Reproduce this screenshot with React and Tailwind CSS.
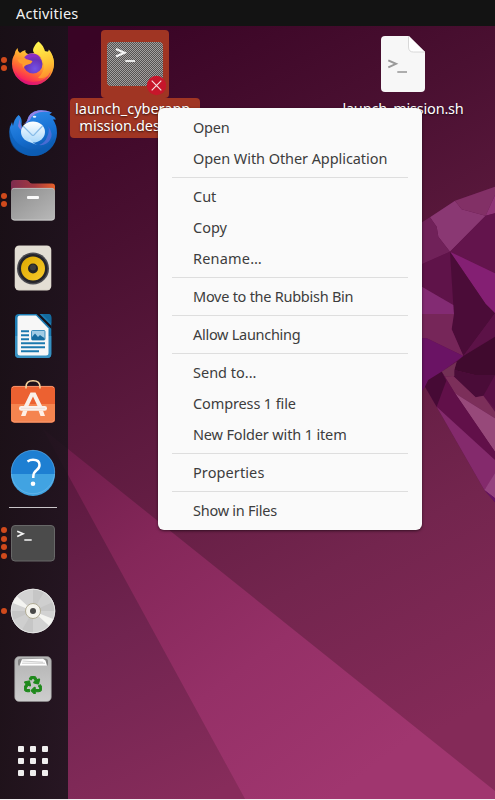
import React from "react";
import { FaRecycle } from "react-icons/fa";

const ICON = "block h-12 w-12 shrink-0";

function Wallpaper() {
  return (
    <svg className="absolute inset-0 h-full w-full" viewBox="0 0 495 799" preserveAspectRatio="none">
      <defs>
        <linearGradient id="wp" gradientUnits="userSpaceOnUse" x1="60" y1="60" x2="420" y2="740">
          <stop offset="0" stopColor="#390425" />
          <stop offset="0.25" stopColor="#4a1031" />
          <stop offset="0.5" stopColor="#5f1b40" />
          <stop offset="0.75" stopColor="#73254e" />
          <stop offset="1" stopColor="#842a58" />
        </linearGradient>
        <linearGradient id="low" gradientUnits="userSpaceOnUse" x1="50" y1="470" x2="200" y2="800">
          <stop offset="0" stopColor="#5b183e" />
          <stop offset="0.5" stopColor="#712450" />
          <stop offset="1" stopColor="#872c5b" />
        </linearGradient>
        <linearGradient id="beam" gradientUnits="userSpaceOnUse" x1="60" y1="440" x2="330" y2="800">
          <stop offset="0" stopColor="#6e1c4a" />
          <stop offset="0.3" stopColor="#842759" />
          <stop offset="0.65" stopColor="#953067" />
          <stop offset="1" stopColor="#a0366f" />
        </linearGradient>
      </defs>
      <rect width="495" height="799" fill="url(#wp)" />
      <path d="M43 429L245 799H0V560Z" fill="url(#low)" />
      <path d="M43 429L495 791V799H245Z" fill="url(#beam)" />
      <g transform="translate(415 130) scale(.33333)">
        <path d="M0 290L45 262L120 212L240 170V1117L208 1080L65 830L30 770L0 750Z" fill="#5f1349" />
        <path d="M45 262L120 212L140 238L212 257L105 365L70 320L65 290Z" fill="#8a3873" />
        <path d="M120 212L240 170V195L212 257L140 238Z" fill="#823066" />
        <path d="M240 195V250L212 257Z" fill="#8f3576" />
        <path d="M0 290L45 262L65 290L70 320L105 365L0 412Z" fill="#702159" />
        <path d="M0 412L105 365L115 525L0 458Z" fill="#5f1349" />
        <path d="M105 365L212 257L240 250V430Z" fill="#63144c" />
        <path d="M105 365L240 430V550L212 522Z" fill="#841f73" />
        <path d="M105 365L212 522L240 550L145 678L110 598L115 525Z" fill="#4b0c38" />
        <path d="M0 458L115 525L117 552H0Z" fill="#832b73" />
        <path d="M0 552H117L110 598L145 678L35 625H0Z" fill="#762659" />
        <path d="M0 625H35L145 678L80 725L40 750L30 770L22 782L0 800Z" fill="#6a1364" />
        <path d="M240 550V620L145 678Z" fill="#5c1247" />
        <path d="M145 678L240 620V735H180L118 720L125 695Z" fill="#400a2e" />
        <path d="M118 720L180 735H240V800L205 797L182 802L115 738Z" fill="#4a0c38" />
        <path d="M240 735V835L205 797Z" fill="#5a0f45" />
        <path d="M80 725L125 695L118 720V738L90 740Z" fill="#733055" />
        <path d="M90 740L115 738L182 802L205 797L240 845V865L120 790Z" fill="#7c2f5a" />
        <path d="M120 790L240 865V965Z" fill="#97497a" />
        <path d="M80 725L120 790L240 965V990L65 830Z" fill="#611049" />
        <path d="M30 770L40 750L80 725L94 752L65 830Z" fill="#460a35" />
        <path d="M65 830L240 990V1035L208 1080Z" fill="#842a6c" />
        <path d="M208 1080L240 1030V1105Z" fill="#95427f" />
        <path d="M208 1080L240 1105V1117Z" fill="#671465" />
      </g>
    </svg>
  );
}

function FirefoxIcon() {
  return (
    <svg className={ICON} viewBox="9 40 48 48">
      <defs>
        <linearGradient id="ffBody" x1="0.8" y1="0.1" x2="0.3" y2="1">
          <stop offset="0" stopColor="#ffe84a" />
          <stop offset="0.35" stopColor="#ffab2f" />
          <stop offset="0.62" stopColor="#ff6a33" />
          <stop offset="0.85" stopColor="#fb2c55" />
          <stop offset="1" stopColor="#d8127f" />
        </linearGradient>
        <linearGradient id="ffTail" x1="0.5" y1="0" x2="0.7" y2="1">
          <stop offset="0" stopColor="#fff44f" />
          <stop offset="0.6" stopColor="#ffc233" />
          <stop offset="1" stopColor="#ff8a2e" />
        </linearGradient>
        <radialGradient id="ffGlobe" cx="0.6" cy="0.75" r="0.8">
          <stop offset="0" stopColor="#7352e6" />
          <stop offset="0.6" stopColor="#6a32b8" />
          <stop offset="1" stopColor="#a02bc0" />
        </radialGradient>
      </defs>
      <path d="M17.500 48Q17.500 51.500 20 53Q22 51 25.500 50Q24.500 52.500 28 54L44 51L50 52Q54 57 54 64A21 21 0 0 1 12 64Q12 58 14.500 54.500Q15 50.500 17.500 48Z" fill="url(#ffBody)" />
      <path d="M38.500 41.500C42 44 44.500 48 45.500 53Q48.500 52.500 48.800 49.500C53 54 54.500 61 53.500 67C51 74 46 79 38 78Q44 73 44 65Q43 57 38 54Q33 54 33 50Q34 45 38.500 41.500Z" fill="url(#ffTail)" />
      <circle cx="33" cy="64" r="9.500" fill="url(#ffGlobe)" />
      <path d="M17.500 59.500Q24 58 27.500 59.500L32.500 61Q31.500 64 28 64.500Q24.500 65 23.500 68Q22 66 22.500 64Q19 63.500 17.500 59.500Z" fill="#ff9d2e" />
      <path d="M24 57.500Q29 52.500 34 53.500Q39 54.500 40.500 58Q36 55.500 32 57Q28 59 24 57.500Z" fill="#8a2fc4" />
      <path d="M15 71Q20 82 33 82Q46 82 51 71Q47 85 33 85Q19 85 15 71Z" fill="#d5107c" fillOpacity=".55" />
    </svg>
  );
}

function ThunderbirdIcon() {
  return (
    <svg className={ICON} viewBox="9 108 48 48">
      <defs>
        <linearGradient id="tbBody" x1="0.3" y1="0" x2="0.6" y2="1">
          <stop offset="0" stopColor="#2f8cea" />
          <stop offset="0.55" stopColor="#1670d2" />
          <stop offset="1" stopColor="#0b55a8" />
        </linearGradient>
        <linearGradient id="tbMail" x1="0" y1="0" x2="0" y2="1">
          <stop offset="0" stopColor="#ffffff" />
          <stop offset="1" stopColor="#a9d8fa" />
        </linearGradient>
      </defs>
      <path d="M18.500 115Q22.500 118 21.500 124Q22.500 127 22 130Q25 125 27 121Q29 112 38 110.500Q44 109.500 52 112.500L49.500 114.500Q54 116 56 119.500L53 119.500Q57 125 57 133A23.700 23 0 0 1 9.500 133Q9 128 12 122L13 126Q14 119 18.500 115Z" fill="url(#tbBody)" />
      <path d="M9.500 125Q11 143 28 149Q43 153 55 138Q50 156 32 156Q12 154 9.500 137Z" fill="#0d5db5" fillOpacity=".65" />
      <path d="M27 121Q29 112 38 110.500Q44 109.500 52 112.500Q41 110.500 35 114Q31 116.500 30 120Q27 123 23 124Q26 123 27 121Z" fill="#9184e8" />
      <path d="M18 116Q20 120 18 126Q20 130 22 130Q20 120 18 116Z" fill="#8279db" />
      <ellipse cx="33" cy="132" rx="12" ry="10.500" fill="url(#tbMail)" />
      <path d="M23 126L32 135Q33 136 34 135L42.500 126" fill="none" stroke="#88bce8" strokeWidth="1.100" />
      <path d="M28 140Q32 144 38 145Q33 144 30 139Z" fill="#c6e7ff" />
      <path d="M39 145Q45 143 47 137Q50 131 48 126Q54 134 50 140Q46 146 39 145Z" fill="#5f71dd" fillOpacity=".7" />
      <ellipse cx="34.500" cy="116.800" rx="1.800" ry="1" fill="#dff2ff" />
    </svg>
  );
}

function FilesIcon() {
  return (
    <svg className={ICON} viewBox="9 176 48 48">
      <defs>
        <linearGradient id="fb"><stop offset="0" stopColor="#7d2c4f" /><stop offset=".55" stopColor="#a53a40" /><stop offset="1" stopColor="#e8602a" /></linearGradient>
        <linearGradient id="ff" x1="0" y1="0" x2="1" y2="1"><stop offset="0" stopColor="#8c8c8c" /><stop offset="1" stopColor="#b9b9b9" /></linearGradient>
      </defs>
      <path d="M11 192V183Q11 180 14 180H26Q28 180 29 181.500Q30 183.500 32 183.500H52Q55 183.500 55 186.500V198H11Z" fill="url(#fb)" />
      <rect x="11" y="188" width="44" height="32.500" rx="3.500" fill="url(#ff)" />
      <path d="M12 189.500Q13 188.400 14.500 188.400H51.500Q53 188.400 54 189.500" fill="none" stroke="#c4c4c4" strokeWidth=".8" />
      <path d="M12 218.500Q13 220 14.500 220H51.500Q53 220 54 218.500" fill="none" stroke="#d2d2d2" strokeWidth=".8" />
      <rect x="27" y="196" width="12" height="3" rx="1" fill="#fafafa" />
    </svg>
  );
}

function RhythmboxIcon() {
  return (
    <svg className={ICON} viewBox="9 244 48 48">
      <defs><linearGradient id="rb" x1="0" y1="0" x2="1" y2="1"><stop offset="0" stopColor="#dca800" /><stop offset="1" stopColor="#f9cb2c" /></linearGradient></defs>
      <rect x="14.700" y="245.500" width="36.600" height="45" rx="4.500" fill="#d9d4c9" />
      <rect x="15.200" y="246" width="35.600" height="43.500" rx="4" fill="#e3ded4" />
      <circle cx="33" cy="268.500" r="16" fill="#4a4a50" />
      <circle cx="33" cy="268.500" r="14.500" fill="#24242a" />
      <circle cx="33" cy="268.500" r="12" fill="url(#rb)" />
      <circle cx="33" cy="268.500" r="5" fill="#242424" />
      <circle cx="33" cy="267.500" r="3" fill="#3d3d3d" />
    </svg>
  );
}

function WriterIcon() {
  return (
    <svg className={ICON} viewBox="9 312 48 48">
      <rect x="15" y="314" width="36.300" height="44" rx="4" fill="#1d7db4" />
      <path d="M15 336H51.300V354Q51.300 358 47.300 358H19Q15 358 15 354Z" fill="#3791c1" />
      <path d="M39 313.500L51.500 326V329L36 313.500Z" fill="#171018" />
      <path d="M42 314H49Q51.300 314 51.300 316.500V323.500Z" fill="#146a9e" />
      <path d="M17.500 318Q17.500 315.500 20 315.500H36L48.500 328.500V353Q48.500 355.500 46 355.500H20Q17.500 355.500 17.500 353Z" fill="#f7f7f7" />
      <path d="M21 331.200H29M21 335.200H29M21 339.200H29M21 343.200H45M21 347.200H45M21 351.200H39" stroke="#1b79ae" strokeWidth="1.900" />
      <rect x="31.500" y="330.500" width="13.500" height="9.500" rx="1" fill="#a2cce5" stroke="#1b79ae" strokeWidth=".8" />
      <path d="M32 340V337L35 333.500L38 337L40 335L42 336.500L44.500 338V340Z" fill="#176c9f" />
    </svg>
  );
}

function SoftwareIcon() {
  return (
    <svg className={ICON} viewBox="9 380 48 48">
      <rect x="11" y="386" width="44" height="36.500" rx="3.500" fill="#ec6131" />
      <path d="M11 404H55V419Q55 422.500 51.500 422.500H14.500Q11 422.500 11 419Z" fill="#f5844f" />
      <path d="M12 420Q13 422 14.500 422H51.500Q53 422 54 420M12 388Q13 386.400 14.500 386.400H51.500Q53 386.400 54 388" fill="none" stroke="#f6a17c" strokeWidth=".8" />
      <path d="M26 388.500V387Q26 380.800 33 380.800Q40 380.800 40 387V388.500" fill="none" stroke="#f6d29b" strokeWidth="1.600" />
      <path d="M30.500 392.500H35.500L42.500 407H38L33 396.500L28 407H23.500Z" fill="#f9efe9" />
      <rect x="19" y="406" width="28" height="4.700" rx="2.200" fill="#f9f1ed" />
      <path d="M23 410.500H27.500L25.500 416H21ZM38.500 410.500H43L45 416H40.500Z" fill="#fff0e6" />
      <path d="M21 408.300H45" stroke="#e0cfc7" strokeWidth=".5" />
    </svg>
  );
}

function HelpIcon() {
  return (
    <svg className={ICON} viewBox="9 448 48 48">
      <circle cx="33" cy="472" r="22" fill="#1e7fd2" />
      <path d="M11 474H55A22 22 0 0 1 11 474Z" fill="#41a3e2" />
      <circle cx="33" cy="472" r="21.700" fill="none" stroke="#8cc8f2" strokeOpacity=".5" strokeWidth=".8" />
      <path d="M27.500 461.500Q30 459.800 33 459.800Q39.500 459.800 39.500 465Q39.500 468 36.500 470.300Q33.300 472.800 33.300 476.500V478" fill="none" stroke="#fff" strokeWidth="2.500" />
      <circle cx="33" cy="483.800" r="2.300" fill="#fff" />
    </svg>
  );
}

function TerminalIcon() {
  return (
    <svg className={ICON} viewBox="9 519 48 48">
      <rect x="11.500" y="525.500" width="43" height="35.500" rx="3.500" fill="#4b4b4b" stroke="#686868" />
      <path d="M17.200 531.200L23 533.700L17.200 536.400" fill="none" stroke="#f5f5f5" strokeWidth="1.700" />
      <path d="M24.300 540H31.700" stroke="#f5f5f5" strokeWidth="1.500" />
    </svg>
  );
}

function DiscIcon() {
  return (
    <svg className={ICON} viewBox="9 587 48 48">
      <circle cx="33" cy="611" r="22.200" fill="#d2d2d2" />
      <path d="M33 611V589A22 22 0 0 1 55 611ZM33 611V633A22 22 0 0 1 11 611Z" fill="#c6c6c6" />
      <path d="M33 611L44 592A22 22 0 0 1 53 602ZM33 611L22 630A22 22 0 0 1 13 620Z" fill="#cfcfcf" />
      <path d="M33 611L12.800 603Q14.500 598.500 17 596.200ZM33 611L53.200 619Q51.500 623.500 49 625.800Z" fill="#f4f4f1" />
      <circle cx="33" cy="611" r="21.800" fill="none" stroke="#efefef" strokeWidth=".7" />
      <circle cx="33" cy="611" r="7.500" fill="#f4f3ed" stroke="#aaa58c" strokeWidth=".9" />
      <circle cx="33" cy="611" r="3" fill="#494949" />
    </svg>
  );
}

function TrashIcon() {
  return (
    <svg className={ICON} viewBox="9 655 48 48">
      <defs>
        <linearGradient id="tr" x1="0" y1="0" x2="0" y2="1"><stop offset="0" stopColor="#b4b4b4" /><stop offset="1" stopColor="#cdcdcd" /></linearGradient>
      </defs>
      <rect x="14.700" y="656.500" width="36.600" height="45" rx="4.500" fill="url(#tr)" stroke="#8f8f8f" strokeWidth=".6" />
      <path d="M18 664V661Q18 658.500 21 658.500H45Q48 658.500 48 661V664Q48 666 46 666H20Q18 666 18 664Z" fill="#858585" />
      <path d="M19.500 665.800L22 659.300L43 658.800L45.500 660.500L47 665.800Z" fill="#fff" />
      <path d="M22 663.200H45M22.500 661L43 662.200" stroke="#aaa" strokeWidth=".6" />
      <FaRecycle x="24" y="676" size={18} color="#1f891c" stroke="#1f891c" strokeWidth={30} />
    </svg>
  );
}

function DockItem({ dots = 0, children }) {
  return (
    <div className="flex h-[68px] w-full shrink-0 items-center">
      <div className="flex w-[9px] shrink-0 flex-col gap-[2.7px] pl-px">
        {Array.from({ length: dots }, (_, i) => (
          <span key={i} className="h-1.5 w-1.5 rounded-full bg-[#d04a1c]" />
        ))}
      </div>
      {children}
    </div>
  );
}

function Dock() {
  return (
    <nav className="flex w-[68px] shrink-0 flex-col bg-linear-to-r from-[#151014]/90 to-[#18131a]/85 pt-1">
      <DockItem dots={2}><FirefoxIcon /></DockItem>
      <DockItem><ThunderbirdIcon /></DockItem>
      <DockItem dots={2}><FilesIcon /></DockItem>
      <DockItem><RhythmboxIcon /></DockItem>
      <DockItem><WriterIcon /></DockItem>
      <DockItem><SoftwareIcon /></DockItem>
      <DockItem><HelpIcon /></DockItem>
      <div className="mt-px mb-px ml-[9px] h-px w-12 shrink-0 bg-[#c9c5c8]" />
      <DockItem dots={4}><TerminalIcon /></DockItem>
      <DockItem dots={1}><DiscIcon /></DockItem>
      <DockItem><TrashIcon /></DockItem>
      <div className="mt-[33px] ml-[18px] grid w-[30px] grid-cols-3 gap-1.5">
        {Array.from({ length: 9 }, (_, i) => (
          <span key={i} className="h-1.5 w-1.5 rounded-[1px] bg-[#efeeee]" />
        ))}
      </div>
    </nav>
  );
}

function LauncherGlyph() {
  return (
    <svg className="block h-[68px] w-[68px]" viewBox="101 30 68 68">
      <defs>
        <pattern id="chk" x="0" y="0" width="2" height="2" patternUnits="userSpaceOnUse">
          <rect width="2" height="2" fill="#555252" />
          <rect width="1" height="1" fill="#a3a09f" />
          <rect x="1" y="1" width="1" height="1" fill="#a3a09f" />
        </pattern>
      </defs>
      <rect x="107" y="42" width="56" height="44" rx="4" fill="url(#chk)" />
      <path d="M116 49L124.500 52.700L116 56.500" fill="none" stroke="#f4f4f4" strokeWidth="2.200" />
      <path d="M125.300 61H135" stroke="#f4f4f4" strokeWidth="1.800" />
      <circle cx="156.500" cy="85.500" r="9.700" fill="#c7162b" />
      <path d="M151.700 80.700L161.300 90.300M161.300 80.700L151.700 90.300" stroke="#f7dfe1" strokeWidth="1.200" />
    </svg>
  );
}

function ScriptGlyph() {
  return (
    <svg className="block h-[68px] w-[68px]" viewBox="369 30 68 68">
      <path d="M381 40Q381 36 385 36H409L425 52V88Q425 92 421 92H385Q381 92 381 88Z" fill="#f7f7f7" />
      <path d="M408.500 36V47Q408.500 52 413.500 52H425" fill="#fff" stroke="#cfcfcf" strokeWidth=".8" />
      <path d="M388.300 60.300L396 63.800L388.300 67.400" fill="none" stroke="#9a9a9a" strokeWidth="2" />
      <path d="M397.300 72H407" stroke="#9a9a9a" strokeWidth="1.600" />
    </svg>
  );
}

function Desktop() {
  const label = "h-10 w-[130px] rounded-[4px] px-px pt-0.5 text-center text-[14.5px] leading-[17px] whitespace-nowrap text-white [text-shadow:0_1px_2px_rgba(0,0,0,0.7)]";
  return (
    <main className="flex flex-1 items-start justify-between pt-1 pr-[27px] pl-0.5">
      <div className="flex flex-col items-center">
        <div className="rounded-[4px] bg-[#a03523]"><LauncherGlyph /></div>
        <div className={label + " bg-[#a03523]"}>
          launch_cyberapp-
          <br />
          mission.desktop
        </div>
      </div>
      <div className="flex flex-col items-center">
        <ScriptGlyph />
        <div className={label + " tracking-[-0.2px]"}>launch_mission.sh</div>
      </div>
    </main>
  );
}

function Item({ children, className = "" }) {
  return (
    <div role="menuitem" className={"flex h-[31px] items-center pl-[35px] whitespace-nowrap " + className}>
      {children}
    </div>
  );
}

function Sep() {
  return <div className="mx-3.5 my-[3px] h-px bg-[#dedede]" />;
}

function ContextMenu() {
  return (
    <div role="menu" className="absolute top-[108px] left-[158px] w-[264px] rounded-[6px] bg-[#fafafa] py-1 text-[14.5px] text-[#3d3d3d] shadow-[0_1px_3px_rgba(0,0,0,0.55)]">
      <Item className="tracking-[-0.2px]">Open</Item>
      <Item className="tracking-[-0.07px]">Open With Other Application</Item>
      <Sep />
      <Item>Cut</Item>
      <Item>Copy</Item>
      <Item className="tracking-[0.2px]">Rename…</Item>
      <Sep />
      <Item className="tracking-[-0.26px]">Move to the Rubbish Bin</Item>
      <Sep />
      <Item className="tracking-[-0.28px]">Allow Launching</Item>
      <Sep />
      <Item>Send to...</Item>
      <Item className="tracking-[-0.12px]">Compress 1 file</Item>
      <Item className="tracking-[-0.15px]">New Folder with 1 item</Item>
      <Sep />
      <Item className="tracking-[0.1px]">Properties</Item>
      <Sep />
      <Item className="tracking-[-0.25px]">Show in Files</Item>
    </div>
  );
}

export default function App() {
  return (
    <div className="h-[800px] w-[495px] overflow-hidden bg-[#f4f1f3] font-['Noto_Sans','Open_Sans',sans-serif]">
      <div className="relative flex h-[799px] flex-col">
        <Wallpaper />
        <header className="relative flex h-[26px] shrink-0 items-center bg-[#131313] pl-4 text-[14.5px] leading-5 tracking-[0.2px] text-[#f2f2f2]">
          Activities
        </header>
        <div className="relative flex min-h-0 flex-1">
          <Dock />
          <Desktop />
        </div>
        <ContextMenu />
      </div>
    </div>
  );
}
